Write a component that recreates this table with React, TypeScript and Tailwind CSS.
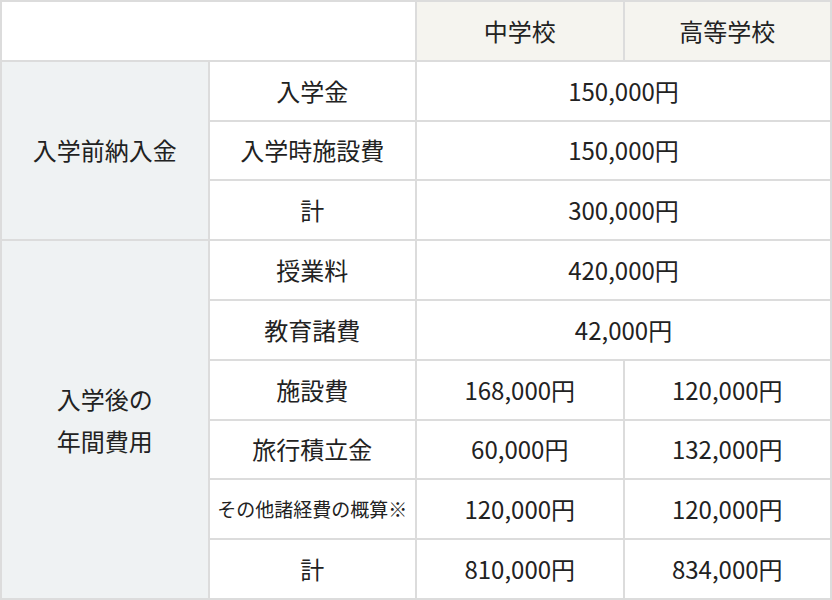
const head = "bg-[#f5f4ef] flex items-center justify-center"
const group = "bg-[#eff2f3] flex items-center justify-center text-center"
const cell = "bg-white flex items-center justify-center"

function App() {
  return (
    <div className="w-[832px] h-[600px] bg-[#dcdcdc] p-[2px] grid grid-cols-4 grid-rows-10 gap-[2px] text-[24px] text-[#222] font-['Noto_Sans_CJK_JP','Noto_Sans',sans-serif]">
      <div className="col-span-2 bg-white"></div>
      <div className={head}>中学校</div>
      <div className={head}>高等学校</div>

      <div className={`${group} row-span-3`}>入学前納入金</div>
      <div className={cell}>入学金</div>
      <div className={`${cell} col-span-2`}>150,000円</div>
      <div className={cell}>入学時施設費</div>
      <div className={`${cell} col-span-2`}>150,000円</div>
      <div className={cell}>計</div>
      <div className={`${cell} col-span-2`}>300,000円</div>

      <div className={`${group} row-span-6 leading-[42px]`}>
        入学後の
        <br />
        年間費用
      </div>
      <div className={cell}>授業料</div>
      <div className={`${cell} col-span-2`}>420,000円</div>
      <div className={cell}>教育諸費</div>
      <div className={`${cell} col-span-2`}>42,000円</div>
      <div className={cell}>施設費</div>
      <div className={cell}>168,000円</div>
      <div className={cell}>120,000円</div>
      <div className={cell}>旅行積立金</div>
      <div className={cell}>60,000円</div>
      <div className={cell}>132,000円</div>
      <div className={`${cell} text-[19px]`}>その他諸経費の概算※</div>
      <div className={cell}>120,000円</div>
      <div className={cell}>120,000円</div>
      <div className={cell}>計</div>
      <div className={cell}>810,000円</div>
      <div className={cell}>834,000円</div>
    </div>
  )
}

export default App
